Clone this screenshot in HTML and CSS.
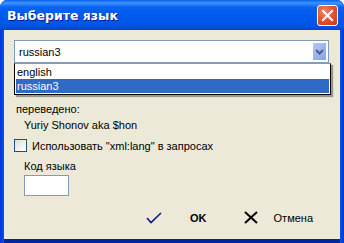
FILE: index.html
```html
<!DOCTYPE html>
<html lang="ru">
<head>
    <meta charset="UTF-8">
    <title>Выберите язык</title>
    <link rel="stylesheet" href="styles.css">
</head>
<body>
    <div class="window">
        <div class="titlebar">
            <span class="title">Выберите язык</span>
            <span class="close-btn">
                <svg width="13" height="13" viewBox="0 0 13 13">
                    <path d="M2 2 L11 11 M11 2 L2 11" stroke="#fff" stroke-width="2.2" stroke-linecap="square"/>
                </svg>
            </span>
        </div>
        <div class="client">
            <div class="combo">
                <span class="combo-value">russian3</span>
                <span class="combo-arrow">
                    <svg width="9" height="6" viewBox="0 0 9 6">
                        <path d="M1 1 L4.5 4.5 L8 1" fill="none" stroke="#4d6185" stroke-width="2"/>
                    </svg>
                </span>
            </div>
            <ul class="dropdown">
                <li>english</li>
                <li class="selected">russian3</li>
            </ul>
            <div class="label">переведено:</div>
            <div class="author">Yuriy Shonov aka $hon</div>
            <label class="check-row">
                <span class="checkbox"></span>
                <span>Использовать "xml:lang" в запросах</span>
            </label>
            <div class="code-label">Код языка</div>
            <div class="code-input"></div>
            <div class="buttons">
                <span class="btn btn-ok">
                    <svg width="16" height="12" viewBox="0 0 16 12">
                        <path d="M1 6 L5 10.5 L15 1" fill="none" stroke="#0a1a8c" stroke-width="1.6"/>
                    </svg>
                    <b class="ok">OK</b>
                </span>
                <span class="btn btn-cancel">
                    <svg width="14" height="13" viewBox="0 0 14 13">
                        <path d="M1 1 L13 12 M13 1 L1 12" stroke="#000" stroke-width="2"/>
                    </svg>
                    <span>Отмена</span>
                </span>
            </div>
        </div>
    </div>
</body>
</html>
```

FILE: styles.css
```css
body {
    margin: 0;
    padding: 0;
    background-color: #fff;
    font-family: "Liberation Sans", Arial, sans-serif;
    font-size: 11px;
    color: #000;
}
.window {
    width: 344px;
    height: 243px;
    display: flex;
    flex-direction: column;
    border-radius: 7px 7px 0 0;
    background: linear-gradient(to right, #0831d9 0, #0055ea 4px, #0055ea 340px, #0831d9 344px);
    overflow: hidden;
}
.titlebar {
    height: 30px;
    display: flex;
    align-items: center;
    justify-content: space-between;
    padding: 0 6px 0 7px;
    background: linear-gradient(to bottom, #0a5fe8 0, #3d95ff 3px, #0a63f0 7px, #0058ee 16px, #0055e5 26px, #0044cf 30px);
}
.title {
    color: #fff;
    font-family: "DejaVu Sans", sans-serif;
    font-weight: bold;
    font-size: 12.5px;
    text-shadow: 1px 1px 0 #0f1f8f;
    margin-top: 1px;
}
.close-btn {
    width: 19px;
    height: 19px;
    border: 1px solid #fff;
    border-radius: 3px;
    background: radial-gradient(circle at 35% 30%, #f08b6a 0, #e0552f 45%, #c93a13 100%);
    display: flex;
    align-items: center;
    justify-content: center;
    margin-top: 1px;
}
.client {
    flex: 1;
    margin: 0 4px 4px;
    background-color: #ece9d8;
    padding: 10px 0 0 10px;
    display: flex;
    flex-direction: column;
    box-shadow: 0 4px 0 #0025a0;
}
.combo {
    width: 313px;
    height: 21px;
    border: 1px solid #7f9db9;
    background-color: #fff;
    display: flex;
    align-items: center;
    justify-content: space-between;
}
.combo-value {
    padding-left: 4px;
}
.combo-arrow {
    width: 13px;
    height: 17px;
    margin-right: 2px;
    background: linear-gradient(135deg, #b9c9f5 0, #9db3ee 50%, #8aa3e8 100%);
    display: flex;
    align-items: center;
    justify-content: center;
}
.dropdown {
    list-style: none;
    margin: 0;
    padding: 1px;
    width: 313px;
    border: 1px solid #000;
    border-top-color: #7f9db9;
    background-color: #fff;
    box-shadow: 2px 2px 1px rgba(0, 0, 0, 0.35);
}
.dropdown li {
    height: 14px;
    line-height: 14px;
    padding-left: 1px;
}
.dropdown li.selected {
    background-color: #316ac5;
    color: #fff;
}
.label {
    margin-top: 8px;
    line-height: 13px;
    padding-left: 2px;
}
.author {
    margin-top: 3px;
    line-height: 13px;
    padding-left: 10px;
}
.check-row {
    display: flex;
    align-items: center;
    gap: 5px;
    margin-top: 7px;
}
.checkbox {
    width: 11px;
    height: 11px;
    border: 1px solid #1c5180;
    background: linear-gradient(135deg, #dcdcd7 0, #fff 90%);
}
.code-label {
    margin-top: 8px;
    padding-left: 10px;
    line-height: 13px;
}
.code-input {
    margin: 2px 0 0 10px;
    width: 43px;
    height: 19px;
    border: 1px solid #7f9db9;
    background-color: #fff;
}
.buttons {
    display: flex;
    justify-content: flex-end;
    gap: 37px;
    padding-right: 27px;
    margin-top: 15px;
}
.btn {
    display: flex;
    align-items: center;
}
.btn svg {
    display: block;
}
.btn-ok {
    gap: 28px;
}
.btn-cancel {
    gap: 16px;
}
.ok {
    font-size: 11px;
}
```
